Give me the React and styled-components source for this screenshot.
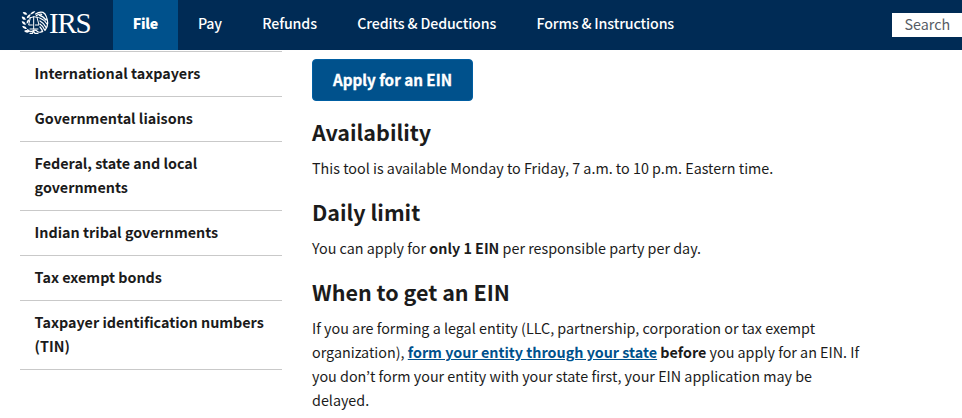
import React from 'react';
import styled, { createGlobalStyle } from 'styled-components';

const navItems = ['File', 'Pay', 'Refunds', 'Credits & Deductions', 'Forms & Instructions'];

const sideItems = [
  'International taxpayers',
  'Governmental liaisons',
  'Federal, state and local governments',
  'Indian tribal governments',
  'Tax exempt bonds',
  'Taxpayer identification numbers (TIN)',
];

const Emblem = () => (
  <svg width="28" height="24" viewBox="0 0 84 72" fill="none" stroke="#fff" strokeLinecap="round">
    {/* laurel branch */}
    <g fill="#fff" stroke="none">
      <path d="M5 4Q14 1 19 10Q10 15 5 4Z" />
      <path d="M43 1Q33 -1 28 9Q37 12 43 1Z" />
      <path d="M29 10Q19 11 17 22Q27 21 29 10Z" />
      <path d="M2 17Q11 15 15 26Q5 29 2 17Z" />
      <path d="M2 31Q11 30 15 41Q5 43 2 31Z" />
      <path d="M24 25Q16 28 17 38Q25 35 24 25Z" />
      <path d="M3 46Q13 43 18 53Q8 57 3 46Z" />
      <path d="M9 60Q17 54 27 61Q18 70 9 60Z" />
    </g>
    {/* scales */}
    <path
      strokeWidth="3"
      d="M25 21Q38 14 52 19M38 17V54M28 20L23 42H34M48 19L54 42H43M27 54H51"
    />
    {/* eagle wing */}
    <path
      strokeWidth="3.8"
      d="M44 9Q55 1 66 4Q73 7 76 17M46 14Q54 7 62 10M55 13Q66 15 75 27M56 21Q68 25 78 39M57 30Q67 35 75 49M57 39Q65 44 71 57M57 48Q62 53 65 62M77 20Q85 42 72 58"
    />
    {/* ribbon */}
    <path strokeWidth="3.6" d="M20 56Q27 65 36 59Q43 55 49 61Q54 66 63 62M27 67H34L38 61L42 67H51" />
  </svg>
);

const App = () => (
  <>
    <GlobalStyle />
    <Header>
      <Logo href="#" aria-label="IRS">
        <Emblem />
        <LogoText>IRS</LogoText>
      </Logo>
      <Nav>
        {navItems.map((item) => (
          <NavLink key={item} href="#" $active={item === 'File'}>
            {item}
          </NavLink>
        ))}
      </Nav>
      <SearchBox>Search</SearchBox>
    </Header>
    <Page>
      <SideMenu>
        {sideItems.map((item) => (
          <SideItem key={item}>{item}</SideItem>
        ))}
      </SideMenu>
      <Content>
        <ApplyButton>Apply for an EIN</ApplyButton>
        <Title>Availability</Title>
        <Text>This tool is available Monday to Friday, 7 a.m. to 10 p.m. Eastern time.</Text>
        <Title>Daily limit</Title>
        <Text>
          You can apply for <b>only 1 EIN</b> per responsible party per day.
        </Text>
        <Title>When to get an EIN</Title>
        <Text>
          If you are forming a legal entity (LLC, partnership, corporation or tax exempt
          organization), <TextLink href="#">form your entity through your state</TextLink>{' '}
          <b>before</b> you apply for an EIN. If you don’t form your entity with your state first,
          your EIN application may be delayed.
        </Text>
      </Content>
    </Page>
  </>
);

export default App;

const GlobalStyle = createGlobalStyle`
  * {
    box-sizing: border-box;
  }
  body {
    margin: 0;
    overflow: hidden;
    background: #fff;
    color: #1b1b1b;
    font-family: 'Noto Sans CJK KR', sans-serif;
    font-size: 14.33px;
    line-height: 24px;
  }
`;

const Header = styled.header`
  display: flex;
  width: 962px;
  height: 50px;
  background: #002b55;
`;

const Logo = styled.a`
  display: flex;
  width: 113px;
  padding: 11px 0 0 21px;
  text-decoration: none;
`;

const LogoText = styled.span`
  font-family: 'Liberation Serif', serif;
  font-size: 29px;
  line-height: 24px;
  letter-spacing: -1.2px;
  color: #fff;
`;

const Nav = styled.nav`
  display: flex;
  flex-grow: 1;
`;

const NavLink = styled.a`
  padding: 11px ${({ $active }) => ($active ? '19.8px' : '20.2px')} 0;
  background: ${({ $active }) => ($active ? '#00518c' : 'transparent')};
  font-size: 14.2px;
  font-weight: ${({ $active }) => ($active ? 900 : 500)};
  letter-spacing: ${({ $active }) => ($active ? '-0.3px' : '-0.13px')};
  color: #fff;
  text-decoration: none;
  white-space: nowrap;
`;

const SearchBox = styled.div`
  width: 70px;
  height: 24px;
  margin-top: 13px;
  padding-left: 12.5px;
  background: #fff;
  line-height: 22px;
  color: #565c65;
`;

const Page = styled.main`
  display: flex;
  gap: 30px;
  padding: 1px 0 0 20px;
`;

const SideMenu = styled.ul`
  width: 262px;
  margin: 0;
  padding: 0;
  list-style: none;
`;

const SideItem = styled.li`
  padding: 9px 14.6px 11px;
  border-top: 1px solid #c9c9c9;
  font-weight: 700;

  &:last-child {
    border-bottom: 1px solid #c9c9c9;
  }
`;

const Content = styled.section`
  width: 556px;
  padding-top: 8px;
`;

const ApplyButton = styled.button`
  display: block;
  width: 161px;
  height: 42px;
  padding: 0 0 3px;
  border: 1px solid #005ea2;
  border-radius: 4px;
  background: #00518c;
  font: inherit;
  font-size: 15.2px;
  font-weight: 700;
  color: #fff;
  -webkit-text-stroke: 0.3px #fff;
`;

const Title = styled.h2`
  margin: 16px 0 8px;
  font-size: 21.5px;
  line-height: 32px;
  font-weight: 700;

  ${ApplyButton} + & {
    margin-top: 15px;
  }
`;

const Text = styled.p`
  margin: 0;
`;

const TextLink = styled.a`
  font-weight: 700;
  color: #00518c;
`;
